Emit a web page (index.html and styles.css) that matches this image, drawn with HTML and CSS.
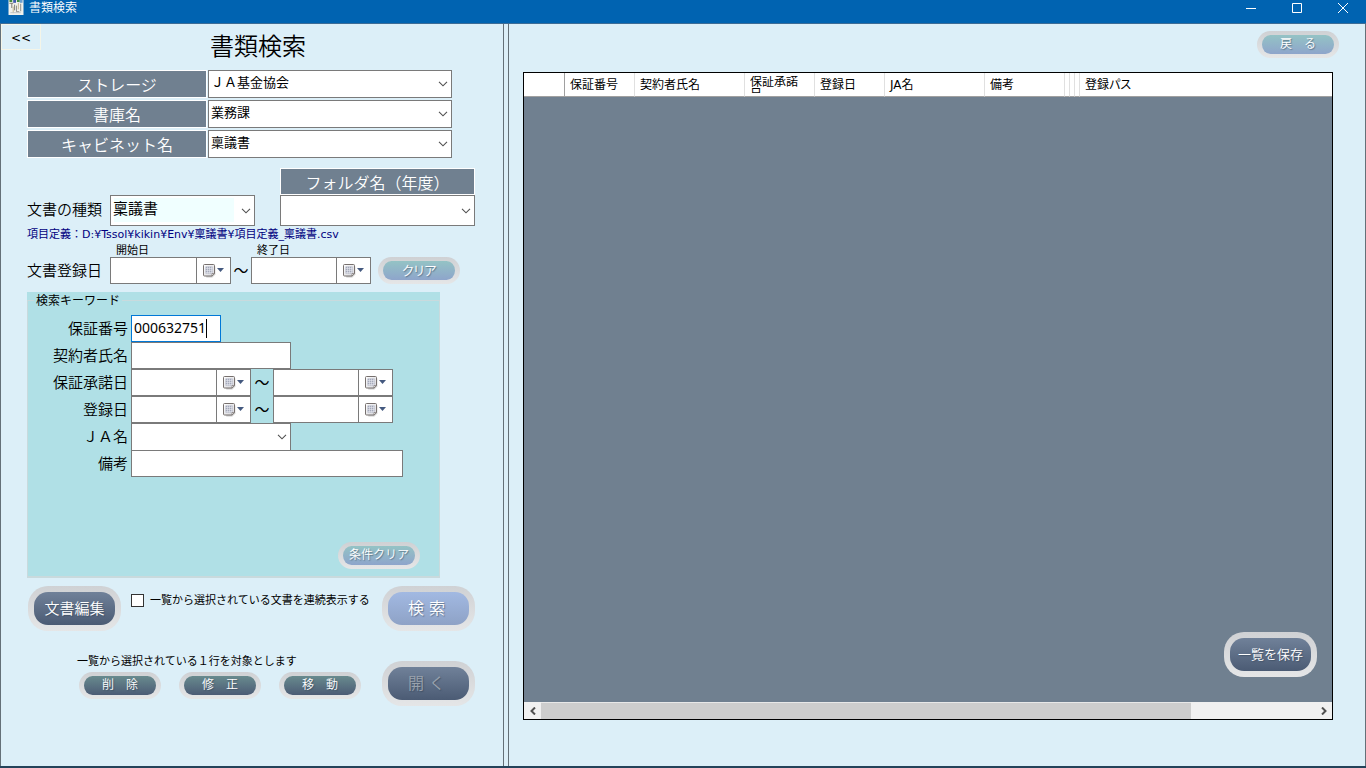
FILE: index.html
```html
<!DOCTYPE html>
<html lang="ja">
<head>
<meta charset="utf-8">
<title>書類検索</title>
<link rel="stylesheet" href="styles.css">
</head>
<body>
<svg class="defs" width="0" height="0" aria-hidden="true">
  <defs>
    <linearGradient id="page" x1="0" y1="0" x2="1" y2="1"><stop offset="0" stop-color="#fff"/><stop offset="1" stop-color="#d5d5da"/></linearGradient>
    <symbol id="chevron" viewBox="0 0 10 6"><path d="M1 .8 5 4.8 9 .8" fill="none" stroke="#505050" stroke-width="1.1"/></symbol>
    <symbol id="calendar" viewBox="0 0 22 14">
      <path d="M2 1.500h9.500v8l-3 3H2.500z" fill="#999" opacity=".5" transform="translate(.8 .9)"/>
      <path d="M1.500.5h9a1 1 0 0 1 1 1v8l-2.500 2.500H1.500a1 1 0 0 1-1-1v-9.500a1 1 0 0 1 1-1z" fill="url(#page)" stroke="#77706e"/>
      <path d="M2.500 2.500h7v7h-7z" fill="#a4a9ba"/>
      <path d="M2.500 4.500h7M2.500 6.500h7M2.500 8.500h7M4.500 2.500v7M6.500 2.500v7M8.500 2.500v7" stroke="#e6e7ee" stroke-width=".6"/>
      <path d="M9 12V9.500h2.500z" fill="#fff" stroke="#77706e" stroke-width=".7"/>
      <path d="M14 4h7l-3.500 4z" fill="#44597f"/>
    </symbol>
  </defs>
</svg>
<div class="window">
  <header class="titlebar">
    <svg class="app-icon" viewBox="0 0 16 16" aria-hidden="true">
      <path d="M0 0h16v16H0z" fill="#f1f1ec"/>
      <path d="M1 0h3v2H1zM9 0h3v2H9z" fill="#3f8a3c"/><path d="M5 0h3v3H5z" fill="#3d59b0"/><path d="M12 0h3v3h-3z" fill="#6a9ed0"/>
      <path d="M1 3.500h4M3.500 3.500v5M6.500 5v6" stroke="#77776f" fill="none"/>
      <path d="M5 7v7M10.500 3v7" stroke="#c2b28c"/><path d="M8.500 6v6.500h3M13 4v8" stroke="#8a8a84" fill="none"/><path d="M2 13.500h11" stroke="#bfc3c6"/>
    </svg>
    <span class="titlebar-text">書類検索</span>
    <div class="window-controls">
      <button type="button" aria-label="最小化"><svg viewBox="0 0 12 12"><path d="M1 7.500h10"/></svg></button>
      <button type="button" aria-label="最大化"><svg viewBox="0 0 12 12"><path d="M1.500 2.500h9v9h-9z"/></svg></button>
      <button type="button" aria-label="閉じる"><svg viewBox="0 0 12 12"><path d="m1 2 10 10M11 2 1 12"/></svg></button>
    </div>
  </header>
  <div class="workspace">
    <main class="search-pane">
      <div class="pane-head">
        <button type="button" class="collapse">&lt;&lt;</button>
        <h1>書類検索</h1>
      </div>
      <form class="form">
        <div class="locations">
          <label class="banner" for="storage">ストレージ</label>
          <div class="combo"><select id="storage"><option>ＪＡ基金協会</option></select><svg><use href="#chevron"/></svg></div>
          <label class="banner" for="library">書庫名</label>
          <div class="combo"><select id="library"><option>業務課</option></select><svg><use href="#chevron"/></svg></div>
          <label class="banner" for="cabinet">キャビネット名</label>
          <div class="combo"><select id="cabinet"><option>稟議書</option></select><svg><use href="#chevron"/></svg></div>
        </div>
        <div class="document-row">
          <label class="field-label kind-label" for="kind">文書の種類</label>
          <div class="combo combo-kind"><select id="kind"><option>稟議書</option></select><svg><use href="#chevron"/></svg></div>
          <div class="folder">
            <label class="banner" for="folder">フォルダ名（年度）</label>
            <div class="combo combo-tall"><select id="folder"><option></option></select><svg><use href="#chevron"/></svg></div>
          </div>
        </div>
        <p class="definition">項目定義：D:¥Tssol¥kikin¥Env¥稟議書¥項目定義_稟議書.csv</p>
        <div class="registered">
          <span></span><label class="caption" for="from">開始日</label><span></span><label class="caption" for="to">終了日</label><span></span>
          <span class="field-label">文書登録日</span>
          <div class="date"><input id="from" type="text"><button type="button" aria-label="開始日を選択"><svg><use href="#calendar"/></svg></button></div>
          <span class="tilde">～</span>
          <div class="date"><input id="to" type="text"><button type="button" aria-label="終了日を選択"><svg><use href="#calendar"/></svg></button></div>
          <button type="button" class="pill pill-small aqua clear">クリア</button>
        </div>
        <div class="keywords">
          <fieldset>
            <legend>検索キーワード</legend>
            <div class="keyword-grid">
              <label class="field-label" for="number">保証番号</label>
              <div class="active-field"><input id="number" class="text short" type="text" value="000632751"><span class="caret"></span></div>
              <label class="field-label" for="name">契約者氏名</label>
              <input id="name" class="text medium" type="text">
              <label class="field-label" for="accept-from">保証承諾日</label>
              <div class="range">
                <div class="date"><input id="accept-from" type="text"><button type="button" aria-label="保証承諾日の開始を選択"><svg><use href="#calendar"/></svg></button></div>
                <span class="tilde">～</span>
                <div class="date"><input aria-label="保証承諾日の終了" type="text"><button type="button" aria-label="保証承諾日の終了を選択"><svg><use href="#calendar"/></svg></button></div>
              </div>
              <label class="field-label" for="reg-from">登録日</label>
              <div class="range">
                <div class="date"><input id="reg-from" type="text"><button type="button" aria-label="登録日の開始を選択"><svg><use href="#calendar"/></svg></button></div>
                <span class="tilde">～</span>
                <div class="date"><input aria-label="登録日の終了" type="text"><button type="button" aria-label="登録日の終了を選択"><svg><use href="#calendar"/></svg></button></div>
              </div>
              <label class="field-label" for="ja">ＪＡ名</label>
              <div class="combo medium"><select id="ja"><option></option></select><svg><use href="#chevron"/></svg></div>
              <label class="field-label" for="note">備考</label>
              <input id="note" class="text long" type="text">
            </div>
            <div class="keyword-foot"><button type="button" class="pill pill-small aqua">条件クリア</button></div>
          </fieldset>
        </div>
        <div class="actions">
          <div class="actions-left">
            <div class="edit-row">
              <button type="button" class="pill pill-large slate">文書編集</button>
              <label class="check"><input type="checkbox">一覧から選択されている文書を連続表示する</label>
            </div>
            <p class="hint">一覧から選択されている１行を対象とします</p>
            <div class="row-buttons">
              <button type="button" class="pill pill-small teal">削　除</button>
              <button type="button" class="pill pill-small teal">修　正</button>
              <button type="button" class="pill pill-small teal">移　動</button>
            </div>
          </div>
          <div class="actions-right">
            <button type="submit" class="pill pill-large sky">検 索</button>
            <button type="button" class="pill pill-large slate" disabled>開 く</button>
          </div>
        </div>
      </form>
    </main>
    <div class="splitter"></div>
    <section class="result-pane">
      <div class="result-head"><button type="button" class="pill pill-small aqua">戻　る</button></div>
      <div class="grid">
        <div class="grid-body">
          <table>
            <colgroup><col class="c-mark"><col class="c70"><col class="c110"><col class="c70"><col class="c70"><col class="c100"><col class="c80"><col class="c5"><col class="c5"><col class="c5"><col></colgroup>
            <thead><tr>
              <th></th><th>保証番号</th><th>契約者氏名</th><th><div class="wrapped">保証承諾日</div></th><th>登録日</th><th>JA名</th><th>備考</th><th></th><th></th><th></th><th>登録パス</th>
            </tr></thead>
          </table>
          <button type="button" class="pill pill-large slate save">一覧を保存</button>
        </div>
        <div class="scrollbar">
          <button type="button" aria-label="左へ"><svg viewBox="0 0 8 8"><path d="M6 .5 2.500 4 6 7.500"/></svg></button>
          <div class="track"><div class="thumb"></div></div>
          <button type="button" aria-label="右へ"><svg viewBox="0 0 8 8"><path d="M2 .5 5.500 4 2 7.500"/></svg></button>
        </div>
      </div>
    </section>
  </div>
</div>
</body>
</html>
```
FILE: styles.css
```css
* { box-sizing: border-box; }

body {
  margin: 0;
  background: #dceff8;
  color: #000;
  font: 400 12px/16px "DejaVu Sans", "Noto Sans CJK JP", sans-serif;
}

button, input, select { margin: 0; font: inherit; color: inherit; }
button { padding: 0; border: 0; background: none; }
p, h1 { margin: 0; font-weight: inherit; }
.defs { position: absolute; }

.window {
  display: flex;
  flex-direction: column;
  min-height: 100vh;
  border-bottom: 2px solid #24435a;
}

/* Title bar */
.titlebar {
  display: flex;
  align-items: flex-start;
  height: 24px;
  padding-left: 8px;
  background: #0063b1;
  border-bottom: 1px solid #3d6c96;
  color: #fff;
}
.app-icon { width: 16px; height: 15px; }
.titlebar-text { margin-left: 5px; font-weight: 350; }
.window-controls { display: flex; margin-left: auto; }
.window-controls button { width: 46px; height: 14px; }
.window-controls svg { display: block; width: 12px; height: 12px; margin: 0 auto; overflow: visible; fill: none; stroke: #fff; }

.workspace {
  display: flex;
  flex: 1;
  border: solid #647078;
  border-width: 0 1px;
}

/* Search pane */
.search-pane { flex: 0 0 502px; }
.pane-head { display: grid; grid-template-columns: 40px 1fr 28px; min-height: 46px; }
.collapse { height: 26px; padding-top: 2px; border: 1px solid #f4f5e8; font-size: 12px; }
.pane-head h1 { font-size: 24px; font-weight: 350; line-height: 46px; text-align: center; }
.form { padding-left: 26px; }

.locations { display: grid; grid-template-columns: 180px 244px; grid-auto-rows: 28px; gap: 2px 1px; }
.banner {
  display: block;
  height: 28px;
  border: 1px solid #fff;
  background: #708090;
  color: #fff;
  font-size: 16px;
  font-weight: 350;
  line-height: 29px;
  text-align: center;
}

.combo { display: grid; height: 28px; background: #fff; }
.combo select {
  grid-area: 1 / 1;
  width: 100%;
  appearance: none;
  border: 1px solid #7a7a7a;
  border-radius: 0;
  background: none;
  padding: 0 20px 2px 2px;
  font-size: 13px;
  outline: 0;
}
.combo svg { grid-area: 1 / 1; place-self: center end; width: 10px; height: 6px; margin-right: 4px; pointer-events: none; }
.combo-kind { width: 145px; height: 31px; background: linear-gradient(#f0ffff, #f0ffff) 4px 3px / 120px 24px no-repeat #fff; }
.combo-kind select { padding-bottom: 4px; font-size: 15px; }
.combo-tall { height: 31px; }

.field-label { font-size: 15px; font-weight: 350; line-height: 28px; white-space: nowrap; }
.document-row { display: flex; align-items: flex-end; margin-top: 10px; }
.kind-label { width: 83px; line-height: 31px; }
.folder { width: 195px; margin-left: 25px; }
.folder .banner { height: 27px; }

.definition { color: #000080; font-size: 11px; line-height: 18px; white-space: nowrap; }
.registered { display: grid; grid-template-columns: 83px 121px 20px 120px auto; grid-template-rows: 13px 27px; justify-content: start; }
.caption { padding-left: 6px; font-size: 11px; line-height: 14px; }
.tilde { font-size: 15px; line-height: 28px; text-align: center; }
.clear { margin-left: 7px; font-size: 13px; font-feature-settings: "palt"; }

.date { display: flex; height: 27px; border: 1px solid #7a7a7a; background: #fff; }
.date input { flex: 1; min-width: 0; border: 0; background: none; outline: 0; }
.date button { width: 34px; border-left: 1px solid #7a7a7a; }
.date svg { display: block; width: 22px; height: 14px; margin: 0 auto; }

/* Keyword group */
.keywords { width: 413px; margin-top: 8px; background: #b0e0e6; }
.keywords fieldset { margin: 0; padding: 6px 0 7px; border: 1px solid #c9dadd; border-bottom-width: 2px; }
.keywords legend { margin-left: 6px; padding: 1px 2px 0; line-height: 16px; }
.keyword-grid { display: grid; grid-template-columns: 100px auto; grid-auto-rows: 27px; column-gap: 3px; justify-content: start; }
.keyword-grid .field-label { text-align: right; }
.text { height: 27px; border: 1px solid #7a7a7a; background: #fff; padding: 0 2px 2px; outline: 0; font-size: 13px; }
.short { width: 90px; border-color: #0078d7; font-family: "Noto Sans", sans-serif; font-size: 14px; }
.medium { width: 160px; }
.long { width: 272px; }
.active-field { position: relative; display: flex; }
.caret { position: absolute; left: 75px; top: 4px; width: 1px; height: 19px; background: #000; }
.range { display: grid; grid-template-columns: 120px 22px 120px; }
.keyword-foot { display: flex; justify-content: flex-end; margin-top: 65px; padding-right: 19px; }

/* Glossy buttons */
.pill {
  --face: linear-gradient(#708199, #4b5b74);
  border: solid transparent;
  background: var(--face) padding-box, linear-gradient(#cfd1d4, #e5e6e7) border-box;
  color: #fff;
  font-weight: 350;
  text-shadow: 1px 1px 1px #33445588;
  white-space: nowrap;
}
.pill-small { width: 82px; height: 27px; border-width: 4px 5px; border-radius: 14px; line-height: 19px; }
.pill-large { width: 93px; height: 45px; border-width: 6px; border-radius: 20px; font-size: 15px; line-height: 32px; }
.aqua { --face: linear-gradient(#94c3c5, #8ea5cb); }
.teal { --face: linear-gradient(#688b8e, #4c5b75); }
.sky { --face: linear-gradient(#a2b9e2, #8ea2c6); }
.pill:disabled { color: #9aa2ad; }

.actions { display: flex; justify-content: space-between; width: 448px; margin-top: 8px; }
.edit-row { display: flex; align-items: flex-start; padding-left: 1px; }
.check { display: flex; align-items: center; gap: 6px; margin: 6px 0 0 10px; font-size: 11px; line-height: 17px; white-space: nowrap; }
.check input { width: 13px; height: 13px; appearance: none; border: 1px solid #333; background: #fff; }
.hint { margin-top: 22px; padding-left: 50px; font-size: 11px; line-height: 17px; }
.row-buttons { display: flex; gap: 18px; margin-top: 2px; padding-left: 52px; }
.actions-right { display: flex; flex-direction: column; gap: 30px; }
.actions-right .pill { padding-right: 4px; font-size: 16px; }

/* Result pane */
.splitter { width: 6px; border: solid #647078; border-width: 0 1px; }
.result-pane { display: flex; flex: 1; flex-direction: column; min-width: 0; padding: 7px 32px 46px 14px; }
.result-head { display: flex; justify-content: flex-end; height: 41px; margin-right: -6px; }
.grid { display: flex; flex: 1; flex-direction: column; border: 1px solid #000; background: #708090; }
.grid-body { position: relative; flex: 1; overflow: hidden; }
.grid table { width: 100%; table-layout: fixed; border-collapse: separate; border-spacing: 0; background: #fff; }
.grid th {
  height: 24px;
  padding: 0 0 0 5px;
  border: solid #e0e0e0;
  border-width: 0 1px 0 0;
  border-bottom: 1px solid #a0a0a0;
  font-weight: inherit;
  font-feature-settings: "palt";
  line-height: 16px;
  text-align: left;
  white-space: nowrap;
}
.grid th:first-child { border-right-color: #a0a0a0; }
.grid th:empty { padding: 0; }
.grid th:last-child { border-right: 0; }
.wrapped { width: 54px; height: 17px; overflow: hidden; line-height: 12px; white-space: normal; }
.c-mark { width: 41px; }
.c70 { width: 70px; }
.c110 { width: 110px; }
.c100 { width: 100px; }
.c80 { width: 80px; }
.c5 { width: 5px; }
.save { position: absolute; right: 15px; bottom: 25px; font-size: 13px; }

.scrollbar { display: flex; height: 17px; background: #f0f0f0; }
.scrollbar button { width: 17px; }
.scrollbar svg { display: block; width: 8px; height: 8px; margin: 0 auto; fill: none; stroke: #505050; stroke-width: 2; }
.track { flex: 1; }
.thumb { width: 84%; height: 100%; border-top: 1px solid #e8e8e8; background: #cdcdcd; }
```
